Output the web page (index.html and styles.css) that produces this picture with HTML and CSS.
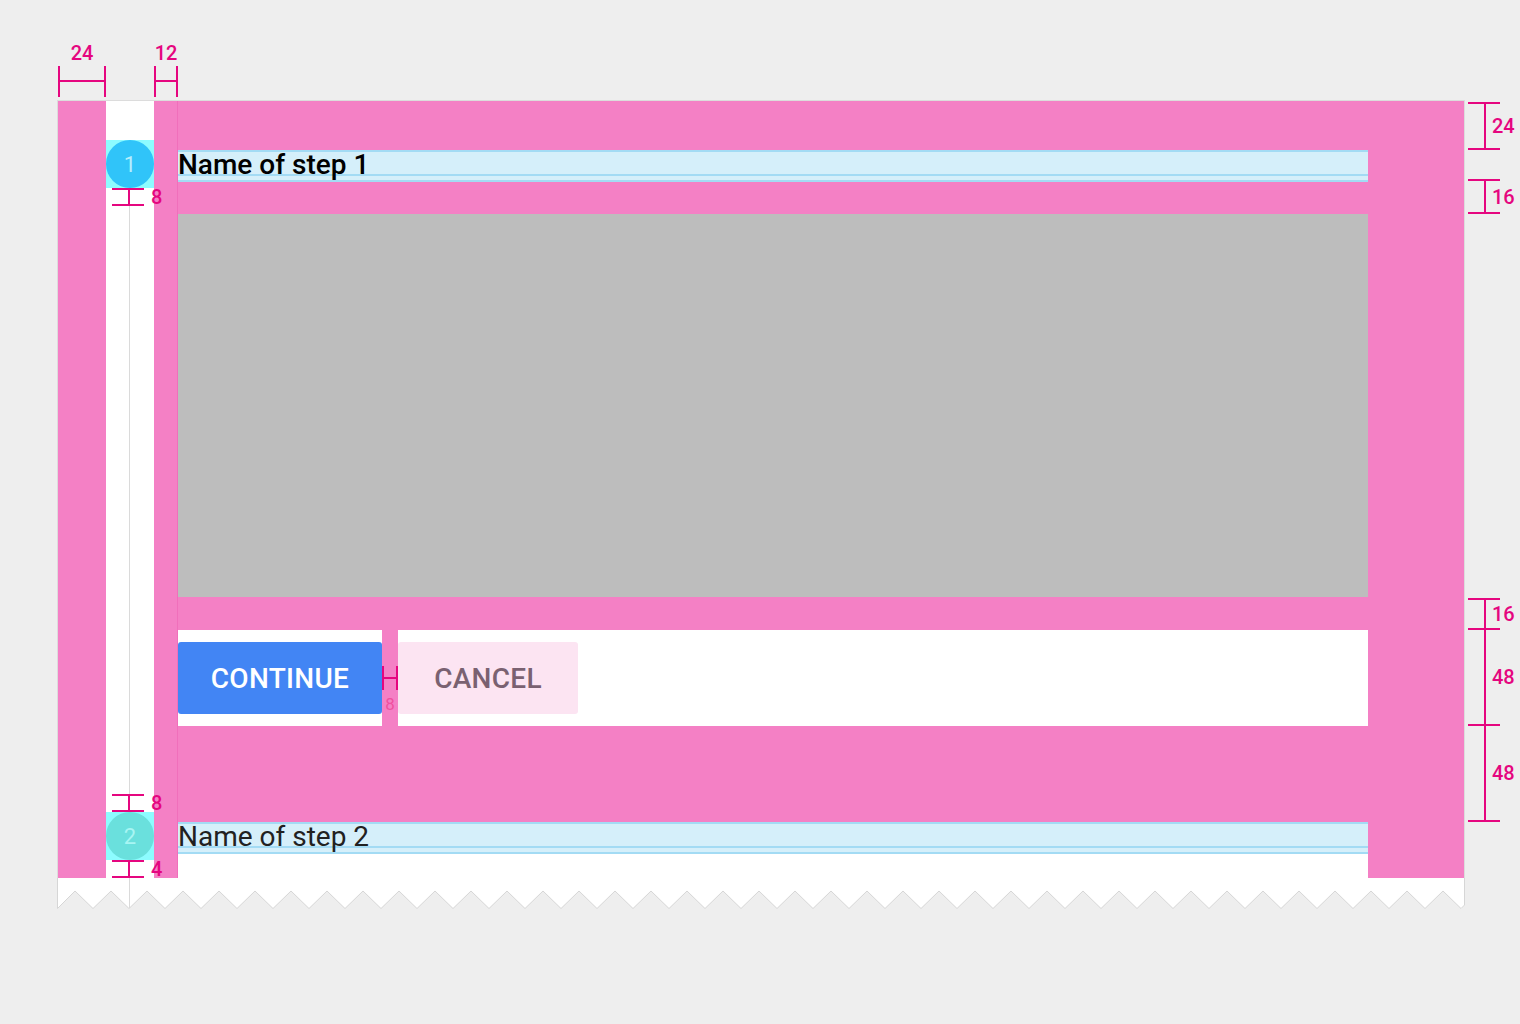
FILE: index.html
```html
<!DOCTYPE html>
<html lang="en">
<head>
<meta charset="utf-8">
<title>Stepper spec</title>
<link rel="stylesheet" href="styles.css">
</head>
<body>
<div class="page">
  <div class="top-dims">
    <div class="hdim hdim-48"><span class="dim-label">24</span><div class="hbar"></div></div>
    <div class="top-gap"></div>
    <div class="hdim hdim-24"><span class="dim-label">12</span><div class="hbar"></div></div>
  </div>
  <div class="main-row">
    <div class="card-wrap">
      <div class="card">
        <div class="col-pink"></div>
        <div class="rail">
          <div class="rail-top"></div>
          <div class="step-icon"><div class="circle circle-active">1</div></div>
          <div class="vdim"><span class="dim-label">8</span></div>
          <div class="rail-line"></div>
          <div class="vdim"><span class="dim-label">8</span></div>
          <div class="step-icon"><div class="circle circle-next">2</div></div>
          <div class="vdim"><span class="dim-label">4</span></div>
        </div>
        <div class="col-pink col-pink-edge"></div>
        <div class="content">
          <div class="sp-49"></div>
          <div class="title-band title-active">Name of step 1</div>
          <div class="sp-32"></div>
          <div class="placeholder"></div>
          <div class="sp-33"></div>
          <div class="actions">
            <div class="btn-cell"><div class="btn btn-primary">CONTINUE</div></div>
            <div class="btn-gap">
              <div class="hdim-small"></div>
              <span class="gap-label">8</span>
            </div>
            <div class="btn-rest"><div class="btn btn-cancel">CANCEL</div></div>
          </div>
          <div class="sp-96"></div>
          <div class="title-band title-next">Name of step 2</div>
          <div class="content-tail"></div>
        </div>
        <div class="col-pink"></div>
      </div>
      <svg class="tear" width="1408" height="32" viewBox="0 0 1408 32" xmlns="http://www.w3.org/2000/svg">
        <polygon fill="#ffffff" points="0.5,0 0.5,30.5 18,13 36,30.5 54,13 72,30.5 90,13 108,30.5 126,13 144,30.5 162,13 180,30.5 198,13 216,30.5 234,13 252,30.5 270,13 288,30.5 306,13 324,30.5 342,13 360,30.5 378,13 396,30.5 414,13 432,30.5 450,13 468,30.5 486,13 504,30.5 522,13 540,30.5 558,13 576,30.5 594,13 612,30.5 630,13 648,30.5 666,13 684,30.5 702,13 720,30.5 738,13 756,30.5 774,13 792,30.5 810,13 828,30.5 846,13 864,30.5 882,13 900,30.5 918,13 936,30.5 954,13 972,30.5 990,13 1008,30.5 1026,13 1044,30.5 1062,13 1080,30.5 1098,13 1116,30.5 1134,13 1152,30.5 1170,13 1188,30.5 1206,13 1224,30.5 1242,13 1260,30.5 1278,13 1296,30.5 1314,13 1332,30.5 1350,13 1368,30.5 1386,13 1404,30.5 1407.5,27 1407.5,0"/>
        <polyline fill="none" stroke="#d6d6d6" stroke-width="1" points="0.5,0 0.5,30.5 18,13 36,30.5 54,13 72,30.5 90,13 108,30.5 126,13 144,30.5 162,13 180,30.5 198,13 216,30.5 234,13 252,30.5 270,13 288,30.5 306,13 324,30.5 342,13 360,30.5 378,13 396,30.5 414,13 432,30.5 450,13 468,30.5 486,13 504,30.5 522,13 540,30.5 558,13 576,30.5 594,13 612,30.5 630,13 648,30.5 666,13 684,30.5 702,13 720,30.5 738,13 756,30.5 774,13 792,30.5 810,13 828,30.5 846,13 864,30.5 882,13 900,30.5 918,13 936,30.5 954,13 972,30.5 990,13 1008,30.5 1026,13 1044,30.5 1062,13 1080,30.5 1098,13 1116,30.5 1134,13 1152,30.5 1170,13 1188,30.5 1206,13 1224,30.5 1242,13 1260,30.5 1278,13 1296,30.5 1314,13 1332,30.5 1350,13 1368,30.5 1386,13 1404,30.5 1407.5,27 1407.5,0"/>
        <line x1="72.5" y1="0" x2="72.5" y2="30" stroke="#dadada" stroke-width="1"/>
      </svg>
    </div>
    <div class="right-dims">
      <div class="rdim rdim-a"><span class="dim-label">24</span></div>
      <div class="rdim rdim-b"><span class="dim-label">16</span></div>
      <div class="rdim rdim-c"><span class="dim-label">16</span></div>
      <div class="rdim rdim-d"><span class="dim-label">48</span></div>
      <div class="rdim rdim-e"><span class="dim-label">48</span></div>
    </div>
  </div>
</div>
</body>
</html>
```

FILE: styles.css
```css
* { box-sizing: border-box; margin: 0; padding: 0; }

body {
  background: #eeeeee;
  font-family: Roboto, "Liberation Sans", Arial, sans-serif;
}

.page { padding-top: 42px; }

/* ---------- dimension annotations ---------- */
.dim-label {
  font-size: 20px;
  font-weight: 500;
  line-height: 22px;
  color: #e5067f;
  flex: none;
}

.top-dims {
  display: flex;
  padding-left: 58px;
  margin-bottom: 3px;
}
.hdim { display: flex; flex-direction: column; align-items: center; }
.hdim-48 { width: 48px; }
.hdim-24 { width: 24px; }
.top-gap { width: 48px; }
.hbar {
  margin-top: 2px;
  width: 100%;
  height: 31px;
  border-left: 2px solid #e5067f;
  border-right: 2px solid #e5067f;
  position: relative;
}
.hbar::before {
  content: "";
  position: absolute;
  left: 0; right: 0; top: 14px;
  height: 2px;
  background: #e5067f;
}

/* ---------- main ---------- */
.main-row { display: flex; align-items: flex-start; }
.card-wrap { margin-left: 57px; width: 1408px; }

.card {
  display: grid;
  grid-template-columns: 48px 48px 24px 1190px 96px;
  height: 778px;
  border: 1px solid #dcdcdc;
  border-bottom: 0;
  background: #f480c5;
}

.col-pink { background: #f480c5; }
.col-pink-edge { box-shadow: inset -1px 0 0 #f06fbb; }

/* rail */
.rail { display: flex; flex-direction: column; background: #ffffff; }
.rail-top { height: 39px; }
.step-icon {
  width: 48px; height: 48px;
  background: #8dfcff;
  display: flex; align-items: center; justify-content: center;
}
.circle {
  width: 48px; height: 48px;
  border-radius: 50%;
  display: flex; align-items: center; justify-content: center;
  font-size: 22px;
  font-weight: 400;
}
.circle-active { background: #30c4f9; color: #b6eefd; }
.circle-next { background: #6ae0dd; color: #a8f5f3; }

.rail-line {
  flex: 1;
  background: linear-gradient(to right, transparent 23px, #dadada 23px, #dadada 24px, transparent 24px);
}
.vdim {
  width: 32px;
  height: 18px;
  margin-left: 6px;
  border-top: 2px solid #e5067f;
  border-bottom: 2px solid #e5067f;
  position: relative;
  display: flex;
  align-items: center;
}
.vdim::before {
  content: "";
  position: absolute;
  left: 16px; top: 0; bottom: 0;
  width: 2px;
  background: #e5067f;
}
.vdim .dim-label { margin-left: 39px; }

/* content */
.content { display: flex; flex-direction: column; }
.sp-49 { height: 49px; }
.sp-32 { height: 32px; }
.sp-33 { height: 33px; }
.sp-96 { height: 96px; }

.title-band {
  height: 32px;
  font-size: 28px;
  line-height: 29px;
  white-space: nowrap;
  background: linear-gradient(to bottom,
    #a3dbf4 0, #a3dbf4 2px,
    #d5effa 2px, #d5effa 24px,
    #a3dbf4 24px, #a3dbf4 26px,
    #d5effa 26px, #d5effa 30px,
    #a3dbf4 30px, #a3dbf4 32px);
}
.title-active { color: #000000; font-weight: 500; }
.title-next { color: #212121; font-weight: 400; }

.placeholder { height: 383px; background: #bdbdbd; }

.actions { height: 96px; display: flex; }
.btn-cell { width: 204px; background: #ffffff; padding: 12px 0; }
.btn-rest { flex: 1; background: #ffffff; padding: 12px 0; }
.btn {
  height: 72px;
  border-radius: 3px;
  display: flex; align-items: center; justify-content: center;
  font-size: 28px;
  font-weight: 500;
  letter-spacing: 0.3px;
}
.btn-primary { width: 204px; background: #4285f4; color: #ffffff; }
.btn-cancel { width: 180px; background: #fce4f2; color: #7a6171; }

.btn-gap {
  width: 16px;
  display: flex; flex-direction: column; align-items: center;
  padding-top: 36px;
}
.hdim-small {
  width: 16px; height: 24px;
  border-left: 2px solid #e5067f;
  border-right: 2px solid #e5067f;
  position: relative;
}
.hdim-small::before {
  content: "";
  position: absolute;
  left: 0; right: 0; top: 11px;
  height: 2px;
  background: #e5067f;
}
.gap-label {
  margin-top: 5px;
  font-size: 17px;
  line-height: 18px;
  color: #f0509f;
}

.content-tail { height: 24px; background: #ffffff; }

.tear { display: block; }

/* right dims */
.right-dims { padding-top: 2px; width: 55px; }
.rdim {
  margin-left: 3px;
  width: 32px;
  border-top: 2px solid #e5067f;
  border-bottom: 2px solid #e5067f;
  position: relative;
  display: flex;
  align-items: center;
}
.rdim::before {
  content: "";
  position: absolute;
  left: 16px; top: 0; bottom: 0;
  width: 2px;
  background: #e5067f;
}
.rdim .dim-label { margin-left: 24px; }
.rdim-a { height: 48px; }
.rdim-b { height: 35px; margin-top: 29px; }
.rdim-c { height: 32px; margin-top: 384px; }
.rdim-d { height: 96px; border-top: 0; }
.rdim-e { height: 96px; border-top: 0; }
```
